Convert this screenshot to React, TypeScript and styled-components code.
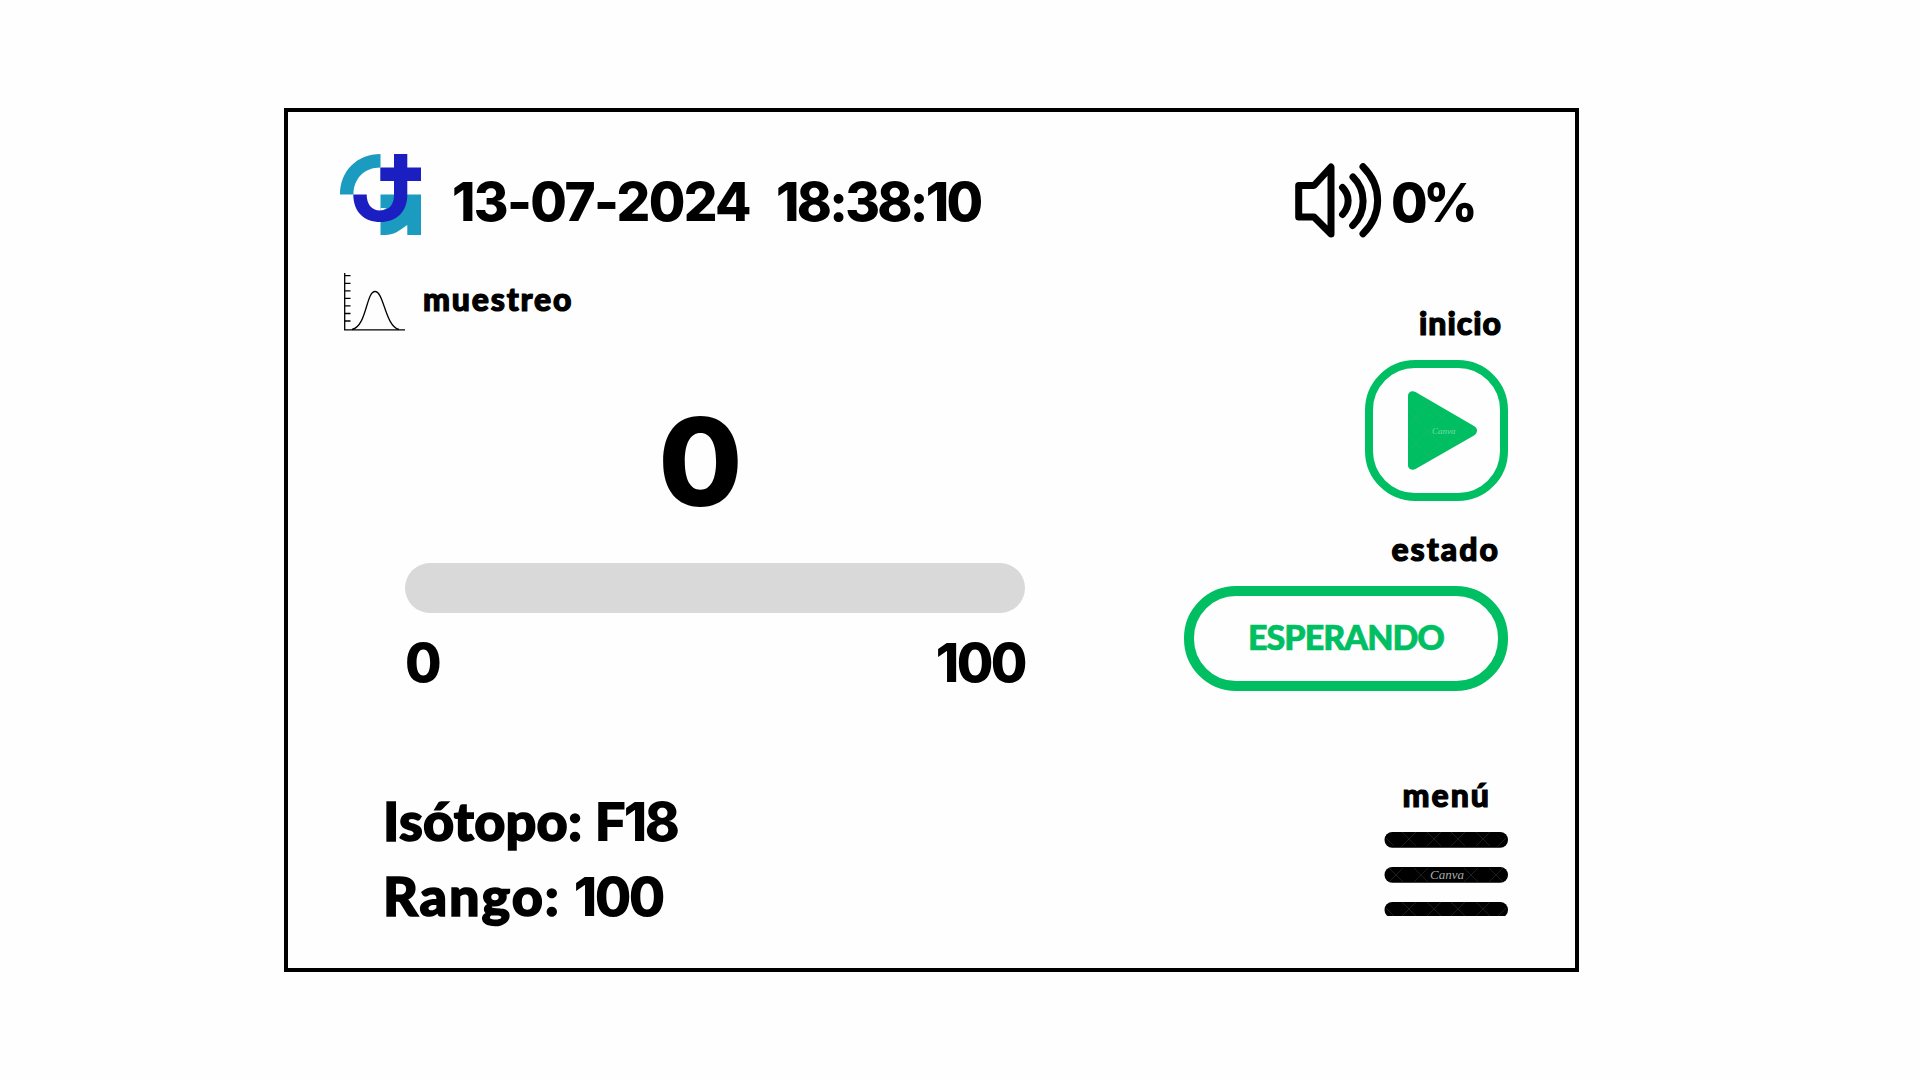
import React from "react";
import styled, { createGlobalStyle } from "styled-components";

const GREEN = "#00bf63";
const WORDS = `Lato, "Open Sans", sans-serif`;
const DIGITS = `Inter, "Open Sans", sans-serif`;

const GlobalStyle = createGlobalStyle`
  * { box-sizing: border-box; }
  body { margin: 0; background: #fefefe; color: #000; }
`;

const Page = styled.main`
  width: 1920px;
  height: 1080px;
  padding: 108px 0 0 284px;
  overflow: hidden;
`;

const Screen = styled.section`
  width: 1295px;
  height: 864px;
  border: 4px solid #000;
  padding: 42px 67px 0 52px;
  display: flex;
  flex-direction: column;
`;

const Header = styled.header`
  display: flex;
  align-items: flex-start;
  height: 109px;
`;

const Numeral = styled.span<{ $size?: number; $track?: number }>`
  display: block;
  font-family: ${DIGITS};
  font-weight: 800;
  font-size: ${(p) => p.$size ?? 53}px;
  letter-spacing: ${(p) => p.$track ?? 0}px;
  line-height: 54px;
  white-space: nowrap;
`;

const Clock = styled.div`
  display: flex;
  padding: 21px 0 0 31px;
`;

const DateText = styled(Numeral)`
  width: 324px;
`;

const Volume = styled.div`
  display: flex;
  margin-left: auto;
  width: 213px;

  svg { margin-top: 9px; }
`;

const VolumeLevel = styled(Numeral)`
  margin: 22px 0 0 9px;
`;

const Body = styled.div`
  display: flex;
  justify-content: space-between;
`;

const Readings = styled.div`
  width: 690px;
  display: flex;
  flex-direction: column;
`;

const Sampling = styled.div`
  display: flex;
  height: 80px;
  padding: 10px 0 0 4px;
  gap: 17px;
`;

const Word = styled.span<{ $track?: number }>`
  display: block;
  font-family: ${WORDS};
  font-weight: 900;
  font-size: 32px;
  line-height: 40px;
  letter-spacing: ${(p) => p.$track ?? 0}px;
  -webkit-text-stroke: 1.2px currentColor;
  white-space: nowrap;
`;

const SamplingLabel = styled(Word)`
  margin: 6px 0 0 1px;
`;

const Gauge = styled.div`
  width: 620px;
  margin-left: 65px;
  padding-top: 58px;
  display: flex;
  flex-direction: column;
`;

const Count = styled(Numeral)`
  align-self: center;
  margin-right: 29px;
  line-height: 122px;
`;

const Track = styled.div`
  height: 50px;
  margin-top: 40px;
  border-radius: 25px;
  background: #d9d9d9;
`;

const Scale = styled.div`
  display: flex;
  justify-content: space-between;
  padding-top: 23px;
`;

const Details = styled.dl`
  margin: 93px 0 0 43px;
`;

const Detail = styled.div<{ $track: number }>`
  display: flex;
  align-items: baseline;
  gap: 13px;
  height: 75px;
  font: 900 54px/75px ${WORDS};
  letter-spacing: ${(p) => p.$track}px;
  -webkit-text-stroke: 1.5px currentColor;

  dt, dd { margin: 0; white-space: nowrap; }
  dd {
    font-family: ${DIGITS};
    font-weight: 800;
    font-size: 53px;
    letter-spacing: -2.5px;
    -webkit-text-stroke: 0;
  }
`;

const Controls = styled.div`
  width: 324px;
  padding-top: 40px;
  display: flex;
  flex-direction: column;
  align-items: flex-end;
`;

const Caption = styled(Word)<{ $inset: number }>`
  margin-right: ${(p) => p.$inset}px;
`;

const StartButton = styled.button`
  width: 143px;
  height: 141px;
  margin: 17px 0 28px;
  padding: 0;
  border: 8px solid ${GREEN};
  border-radius: 50px;
  background: transparent;
  display: flex;
  align-items: center;
  justify-content: center;

  svg { margin-left: 12px; }
`;

const Status = styled.div`
  width: 324px;
  height: 105px;
  margin: 17px 0 84px;
  padding-bottom: 3px;
  border: 10px solid ${GREEN};
  border-radius: 52px;
  display: flex;
  align-items: center;
  justify-content: center;
  color: ${GREEN};
`;

const StatusText = styled(Word)`
  font-size: 34px;
  -webkit-text-stroke-width: 0.7px;
`;

const MenuButton = styled.button`
  margin: 17px 0 0;
  padding: 0;
  border: 0;
  background: transparent;
  display: flex;
`;

function Logo() {
  return (
    <svg width="81" height="81" viewBox="0 0 81 81">
      <path fill="#1c9bc1" d="M0 40.5C0 17 17 0 40.5 0v13.5c-16 0-27 11-27 27zM40.5 40.5H81V81H67.300V71C58 77.500 54 81 45 81h-4.500z" />
      <path fill="#fefefe" d="M40.500 54h6c-2 1.700-4 2.300-6 2.600z" />
      <path fill="#1b1ec0" d="M54 0h13.300v13.500H81V27H67.300v14c0 17-11 27-27 27s-27-10-27-27.500h13.400c0 9 4.300 16 13.600 16S54 50 54 41V27H40.300V13.500H54z" />
    </svg>
  );
}

function SpeakerIcon() {
  return (
    <svg width="87" height="75" viewBox="0 0 87 75" fill="none" stroke="#000" strokeWidth="7" strokeLinecap="round" strokeLinejoin="round">
      <path d="M3.700 22.500H19L36 4v67L19 54H3.700z" />
      <path d="M47.500 24.500c7.500 7.500 7.500 18.500 0 27M58 14c13.500 13 13.500 35.500-.3 48.500M68 3.700c19.500 19.500 19.500 48 0 67" />
    </svg>
  );
}

function BellCurveIcon() {
  return (
    <svg width="61" height="58" viewBox="0 0 61 58" fill="none" stroke="#000" strokeWidth="1.300">
      <path d="M.7 0v56.800H61M.7 2.700H6.500M.7 10.300H6.500M.7 17.800H6.500M.7 25.400H6.500M.7 32.900H6.500M.7 40.500H6.500M.7 48H6.500" />
      <path d="M8 56.500C23 53 22 18.500 31 18.500S41 53 55 56.500" />
    </svg>
  );
}

function PlayIcon() {
  return (
    <svg width="69" height="79" viewBox="0 0 69 79">
      <path fill={GREEN} d="M0 5C0 1 4 -1 7.500 1L66 35c4 2 4 7 0 9.500L7.500 78C4 80 0 78 0 74.500z" />
      <path d="M0 20L30 50M0 44L24 68M9 2L52 43M0 35L23 11M0 60L40 20M7 77L53 31" stroke="#22b967" strokeWidth=".6" />
      <text x="24" y="43" fontFamily="Liberation Serif, serif" fontStyle="italic" fontSize="9" fill="#73dda5">Canva</text>
    </svg>
  );
}

const BAR_TOPS = [0, 35, 70];

function MenuIcon() {
  return (
    <svg width="124" height="84" viewBox="0 0 124 84">
      {BAR_TOPS.map((y) => (
        <React.Fragment key={y}>
          <rect x=".5" y={y} width="123.500" height="15.700" rx="7.800" />
          <path
            d={y === 35 ? "M5 36l14 14M19 36L5 50M30 36l14 14M44 36L30 50M80 36l14 14M94 36L80 50M105 36l14 14M119 36l-14 14"
              : `M2 ${y + 6}l8 8M18 ${y}l14 14M32 ${y}l-14 14M43 ${y}l14 14M57 ${y}l-14 14M67 ${y}l14 14M81 ${y}l-14 14M92 ${y}l14 14M106 ${y}l-14 14M122 ${y + 6}l-8 8`}
            stroke="#333"
            strokeWidth=".6"
          />
        </React.Fragment>
      ))}
      <text x="46" y="47" fontFamily="Liberation Serif, serif" fontStyle="italic" fontSize="13" fill="#aaa">Canva</text>
    </svg>
  );
}

export default function App() {
  return (
    <Page>
      <GlobalStyle />
      <Screen>
        <Header>
          <Logo />
          <Clock>
            <DateText $track={-1.6}>13-07-2024</DateText>
            <Numeral $track={-2.7}>18:38:10</Numeral>
          </Clock>
          <Volume>
            <SpeakerIcon />
            <VolumeLevel $track={-4.5}>0%</VolumeLevel>
          </Volume>
        </Header>
        <Body>
          <Readings>
            <Sampling>
              <BellCurveIcon />
              <SamplingLabel $track={1.8}>muestreo</SamplingLabel>
            </Sampling>
            <Gauge>
              <Count $size={122}>0</Count>
              <Track />
              <Scale>
                <Numeral>0</Numeral>
                <Numeral $track={-2.5}>100</Numeral>
              </Scale>
            </Gauge>
            <Details>
              <Detail $track={0.2}><dt>Isótopo:</dt><dd>F18</dd></Detail>
              <Detail $track={1.9}><dt>Rango:</dt><dd>100</dd></Detail>
            </Details>
          </Readings>
          <Controls>
            <Caption $inset={6} $track={1}>inicio</Caption>
            <StartButton aria-label="inicio"><PlayIcon /></StartButton>
            <Caption $inset={8} $track={2}>estado</Caption>
            <Status><StatusText $track={-1}>ESPERANDO</StatusText></Status>
            <Caption $inset={17} $track={2}>menú</Caption>
            <MenuButton aria-label="menú"><MenuIcon /></MenuButton>
          </Controls>
        </Body>
      </Screen>
    </Page>
  );
}
